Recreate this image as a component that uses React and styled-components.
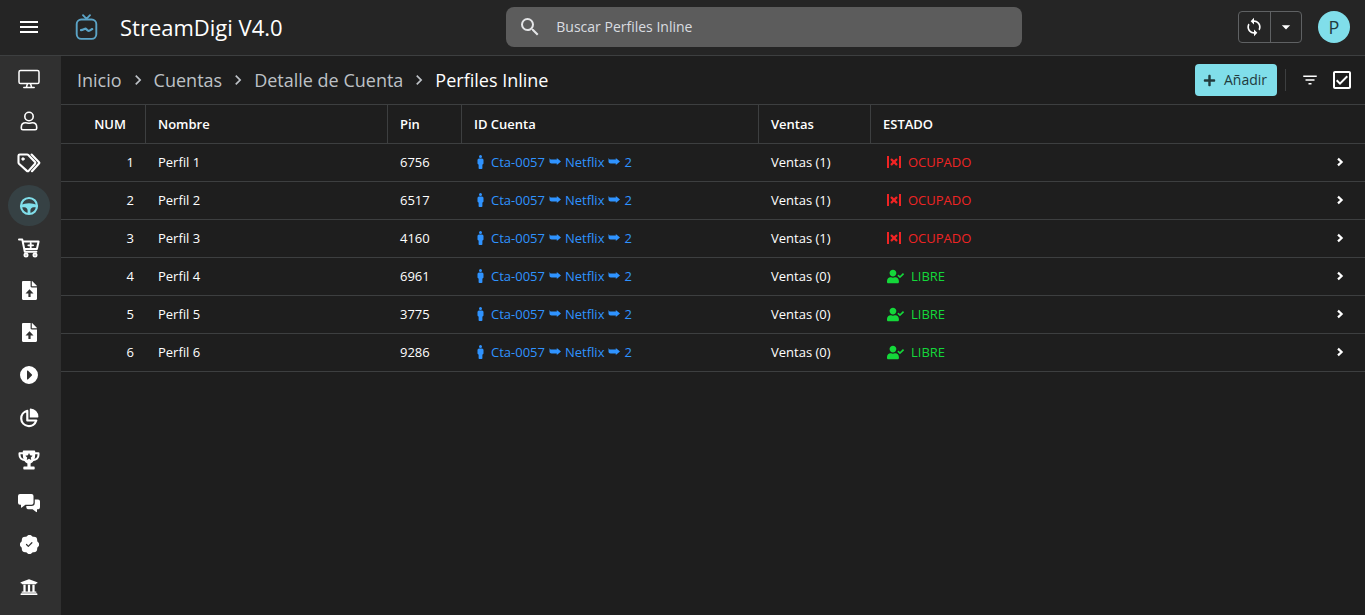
import React from "react";
import styled, { createGlobalStyle } from "styled-components";
import {
  MdMenu,
  MdSearch,
  MdSync,
  MdArrowDropDown,
  MdChevronRight,
  MdFilterList,
  MdOutlineCheckBox,
} from "react-icons/md";
import { FaPlus, FaUserCheck, FaUniversity } from "react-icons/fa";
import { BsPatchCheckFill } from "react-icons/bs";

const color = {
  page: "#1e1e1e",
  header: "#252525",
  rail: "#303030",
  line: "#3d3f40",
  text: "#ffffff",
  muted: "#bdc1c6",
  accent: "#80deea",
  accentInk: "#213a3d",
  link: "#2f93ff",
  busy: "#f02424",
  free: "#14d83a",
};

const GlobalStyle = createGlobalStyle`
  *, *::before, *::after { box-sizing: border-box; }
  body {
    margin: 0;
    background: ${color.page};
    color: ${color.text};
    font-family: "Open Sans", "Noto Sans", sans-serif;
    font-size: 13px;
    line-height: 18px;
  }
  button, input { font: inherit; color: inherit; }
  a { color: inherit; text-decoration: none; }
  svg { display: block; flex: none; }
`;

const Shell = styled.div`
  display: flex;
  flex-direction: column;
  min-height: 100vh;
`;

const Header = styled.header`
  display: flex;
  justify-content: space-between;
  align-items: center;
  height: 56px;
  padding: 0 15px 2px;
  background: ${color.header};
  border-bottom: 1px solid ${color.line};
`;

const Brand = styled.div`
  display: flex;
  align-items: center;
  padding-right: 8px;
`;

const IconButton = styled.button`
  display: flex;
  align-items: center;
  justify-content: center;
  width: ${(p) => p.$size || 28}px;
  height: ${(p) => p.$size || 28}px;
  padding: 0;
  border: 0;
  background: none;
  cursor: pointer;
`;

const BrandLink = styled.a`
  display: flex;
  align-items: center;
  gap: 20px;
  margin-left: 31px;
`;

const Title = styled.h1`
  margin: 0;
  font-size: 22px;
  line-height: 30px;
  font-weight: 400;
  white-space: nowrap;
`;

const SearchBox = styled.label`
  display: flex;
  flex: 0 1 516px;
  align-items: center;
  gap: 14px;
  height: 40px;
  padding: 0 12px;
  border-radius: 8px;
  background: #5c5c5c;
  color: #e4e5e7;
`;

const SearchInput = styled.input`
  flex: 1;
  min-width: 0;
  border: 0;
  outline: 0;
  padding: 0;
  background: none;
  font-size: 14px;
  line-height: 20px;
  &::placeholder { color: #dadce0; opacity: 1; }
`;

const HeaderActions = styled.div`
  display: flex;
  align-items: center;
  justify-content: flex-end;
  gap: 16px;
`;

const SplitButton = styled.div`
  display: flex;
  height: 32px;
  border: 1px solid #5f6163;
  border-radius: 4px;
`;

const SplitPart = styled.button`
  display: flex;
  align-items: center;
  justify-content: center;
  width: 31px;
  padding: 0;
  border: 0;
  background: none;
  cursor: pointer;
  & + & { border-left: 1px solid #5f6163; }
`;

const Avatar = styled.button`
  width: 32px;
  height: 32px;
  padding: 0;
  border: 0;
  border-radius: 50%;
  background: ${color.accent};
  color: ${color.accentInk};
  font-size: 18px;
  line-height: 32px;
  cursor: pointer;
`;

const Body = styled.div`
  display: flex;
  flex: 1;
`;

const Rail = styled.nav`
  display: flex;
  flex-direction: column;
  align-items: center;
  justify-content: space-between;
  flex: none;
  width: 61px;
  padding: 2px 3px 7px 0;
  background: ${color.rail};
`;

const RailLink = styled.a`
  display: flex;
  align-items: center;
  justify-content: center;
  width: 42px;
  height: 41px;
  border-radius: 50%;
  color: ${(p) => (p.$active ? color.accent : color.text)};
  background: ${(p) => (p.$active ? "#364144" : "none")};
`;

const Main = styled.main`
  flex: 1;
  min-width: 0;
`;

const Toolbar = styled.div`
  display: flex;
  align-items: center;
  justify-content: space-between;
  height: 49px;
  padding: 0 11px 0 16px;
  border-bottom: 1px solid ${color.line};
`;

const Crumbs = styled.nav`
  display: flex;
  align-items: center;
  gap: 6px;
  font-size: 18px;
  line-height: 26px;
  color: ${color.muted};
`;

const Current = styled.span`
  color: ${color.text};
`;

const Tools = styled.div`
  display: flex;
  align-items: center;
`;

const AddButton = styled.button`
  display: flex;
  align-items: center;
  gap: 8px;
  height: 32px;
  padding: 0 10px 0 8px;
  border: 0;
  border-radius: 4px;
  background: ${color.accent};
  color: ${color.accentInk};
  font-size: 14px;
  line-height: 20px;
  cursor: pointer;
`;

const Divider = styled.span`
  width: 1px;
  height: 22px;
  margin: 0 14px 0 8px;
  background: ${color.line};
`;

const TickBox = styled.span`
  margin-left: 10px;
`;

const Table = styled.table`
  width: 100%;
  table-layout: fixed;
  border-collapse: separate;
  border-spacing: 0;
`;

const Col = styled.col`
  width: ${(p) => (p.$width ? `${p.$width}px` : "auto")};
`;

const HeadCell = styled.th`
  height: 39px;
  padding: 0 ${(p) => (p.$num ? 19 : 12)}px 0 12px;
  border-bottom: 1px solid ${color.line};
  border-right: ${(p) => (p.$open ? "0" : `1px solid ${color.line}`)};
  font-weight: 600;
  text-align: ${(p) => (p.$num ? "right" : "left")};
`;

const Cell = styled.td`
  height: 38px;
  padding: 0 12px 1px;
  border-bottom: 1px solid ${color.line};
  text-align: ${(p) => (p.$num ? "right" : "left")};
  white-space: nowrap;
`;

const AccountLink = styled.a`
  display: flex;
  align-items: center;
  gap: 4px;
  padding-left: 3px;
  color: ${color.link};
  svg:first-child { margin-right: 3px; }
`;

const Status = styled.span`
  display: flex;
  align-items: center;
  gap: 7px;
  padding-left: 4px;
  color: ${(p) => (p.$busy ? color.busy : color.free)};
`;

const OpenLink = styled.a`
  display: flex;
  justify-content: flex-end;
  padding-right: 9px;
`;

const svg = (w, h, vb, children, extra = {}) => (
  <svg width={w} height={h} viewBox={vb} fill="currentColor" aria-hidden="true" {...extra}>
    {children}
  </svg>
);
const stroke = (width) => ({
  fill: "none",
  stroke: "currentColor",
  strokeWidth: width,
  strokeLinecap: "round",
  strokeLinejoin: "round",
});

const LogoIcon = () =>
  svg(26, 28, "0 0 26 28", (
    <>
      <rect x="2.700" y="6.500" width="19.600" height="19.400" rx="4.600" />
      <path d="M9 2.200 12.500 5.800 16 2.200" />
      <path d="M7 17.200c2.200-.2 3.200-1.300 4.800-1.500.9.500 1.500 2.200 3 2.100 1.300-.1 2-1 3.500-1.700" strokeWidth="2.200" />
    </>
  ), { ...stroke(1.9), stroke: "#5ba4c7" });

const DesktopIcon = () =>
  svg(22, 20, "0 0 22 20", (
    <>
      <rect x="1" y="1.500" width="20" height="13" rx="1.600" />
      <path d="M9.400 14.800 8.500 18m4.100-3.200.9 3.200M5.800 18.500h10.400" />
    </>
  ), stroke(1.5));

const UserIcon = () =>
  svg(18, 20, "0 0 18 20", (
    <>
      <circle cx="9" cy="5.500" r="4.200" />
      <path d="M5.600 11.700c1.300 0 1.900.6 3.400.6s2.100-.6 3.400-.6c2.600 0 4.300 1.900 4.300 4.500v1c0 .9-.6 1.500-1.500 1.500H2.800c-.9 0-1.500-.6-1.500-1.500v-1c0-2.600 1.700-4.500 4.300-4.500z" />
    </>
  ), stroke(1.6));

const TagsIcon = () =>
  svg(24, 20, "0 0 24 20", (
    <>
      <path d="M1.500 2.800c0-.8.5-1.300 1.300-1.300h7.300c.5 0 .9.200 1.200.5l6.700 7c.5.500.5 1.200 0 1.700l-6.400 7.200c-.5.500-1.200.5-1.700 0L2 10.700c-.3-.3-.5-.7-.5-1.200z" />
      <path d="m14.600 1.600 7.400 7.600c.4.400.4.900 0 1.300l-7 7.700" />
      <circle cx="6" cy="6" r="1.200" fill="currentColor" strokeWidth="1" />
    </>
  ), stroke(2.1));

const WheelIcon = () =>
  svg(20, 20, "0 0 20 20", (
    <>
      <circle cx="10" cy="10" r="8" fill="none" stroke="currentColor" strokeWidth="2.200" />
      <path d="M2 8.800c3-.6 4.600-1.600 8-1.600s5 1 8 1.600v2.400h-3.300c-1.900 0-3.300 1.500-3.300 3.300V18H8.600v-3.500c0-1.800-1.400-3.300-3.300-3.300H2z" />
    </>
  ));

const CartIcon = () =>
  svg(22, 20, "0 0 22 20", (
    <>
      <path d="M1 1.600h3.300l2.500 12.200h11.600M5 3.600h15.600l-1.700 7.300H6.400" />
      <path d="M12.700 4.900v4.800M10.300 7.300h4.800" strokeWidth="1.800" />
      <circle cx="8" cy="17" r="1.500" />
      <circle cx="17" cy="17" r="1.500" />
    </>
  ), stroke(2));

const FileUpIcon = () =>
  svg(15, 19, "0 0 15 19", (
    <>
      <path fillRule="evenodd" d="M1.200 0H8.600v5.200c0 .7.500 1.200 1.200 1.200H15v11.400c0 .7-.5 1.200-1.200 1.200H1.200C.5 19 0 18.500 0 17.800V1.200C0 .5.500 0 1.200 0zM7.500 8.300 3.500 12.400h2.900v3.500h2.200v-3.500h2.900z" />
      <path d="M9.800 0c.3 0 .5.100.8.400l4 4c.3.300.4.500.4.800H9.800z" />
    </>
  ));

const PlayIcon = () =>
  svg(18, 18, "0 0 18 18", (
    <path fillRule="evenodd" d="M9 0a9 9 0 1 1 0 18A9 9 0 0 1 9 0zM7 5v8c0 .5.500.700.900.400l4-3.900c.300-.300.300-.700 0-1l-4-3.900C7.500 4.300 7 4.500 7 5z" />
  ));

const PieIcon = () =>
  svg(20, 20, "0 0 20 20", (
    <>
      <path d="M8.300 2.800a7.700 7.700 0 1 0 9 9.700H8.300z" fill="none" stroke="currentColor" strokeWidth="2.200" strokeLinejoin="round" />
      <path d="M10.800 1c0-.4.300-.6.700-.6a8.200 8.200 0 0 1 7.900 8.300c0 .4-.2.700-.6.700h-8z" />
    </>
  ));

const TrophyIcon = () =>
  svg(22, 20, "0 0 22 20", (
    <>
      <path d="M5 3.300H1.500v1.500c0 3.200 2.500 5.200 6 5.400M17 3.300h3.500v1.500c0 3.200-2.500 5.200-6 5.400" {...stroke(2)} />
      <path d="M5.600.4h10.800c.5 0 .8.300.8.800v3.300c0 4.700-1.700 7.800-4.600 8.900v3.100h3c.7 0 1.100.4 1.100 1.100v1.200c0 .4-.3.700-.7.700H6c-.4 0-.7-.3-.7-.7v-1.200c0-.7.400-1.100 1.100-1.100h3v-3.100C6.500 12.300 4.800 9.200 4.800 4.500V1.200c0-.5.300-.8.800-.8z" />
      <path d="m11 3 1.100 2.300 2.500.4-1.800 1.700.4 2.500-2.200-1.200-2.200 1.200.4-2.500-1.800-1.700 2.500-.4z" fill={color.rail} />
    </>
  ));

const ChatIcon = () =>
  svg(22, 20, "0 0 22 20", (
    <>
      <path d="M2 1h11.500a2 2 0 0 1 2 2v6.800a2 2 0 0 1-2 2H7.400L3.800 14.600c-.4.300-.8.100-.8-.4v-2.400H2a2 2 0 0 1-2-2V3a2 2 0 0 1 2-2z" />
      <path d="M16.800 6.500H20a2 2 0 0 1 2 2v5.800a2 2 0 0 1-2 2h-1v2.300c0 .5-.4.700-.8.400l-3.600-2.700h-4.300a2 2 0 0 1-2-2v-1.200h5.200a3.300 3.300 0 0 0 3.300-3.300z" />
    </>
  ));

const PersonIcon = () =>
  svg(7, 14, "0 0 7 14", (
    <path d="M3.500 0a1.500 1.500 0 1 1 0 3 1.500 1.500 0 0 1 0-3zM2 3.500h3A1.500 1.500 0 0 1 6.500 5v3.600c0 .5-.4.800-.9.800H5.400v3.800c0 .5-.3.800-.8.800H2.400c-.5 0-.8-.3-.8-.8V9.400h-.2c-.5 0-.9-.3-.9-.8V5A1.500 1.500 0 0 1 2 3.500z" />
  ));

const HookArrow = () =>
  svg(12, 8, "0 0 12 8", (
    <path d="M.5 0 1.500 1.600H7.800V0L12 3.500 7.800 7V5.500H2.600C1.200 5.500.5 4.800.5 3.600z" />
  ));

const OpenIcon = () =>
  svg(8, 10, "0 0 8 10", <path d="m2 1.600 3.600 3.400L2 8.400" />, { ...stroke(2.2), strokeLinecap: "butt", strokeLinejoin: "miter" });

const BusyIcon = () =>
  svg(14, 12, "0 0 14 12", (
    <>
      <path d="M0 0h2v12H0zM12 0h2v12h-2z" />
      <path d="m4.600 3.600 4.800 4.800m0-4.800-4.800 4.800" stroke="currentColor" strokeWidth="2.200" strokeLinecap="round" />
    </>
  ));

const menu = [
  ["Panel", DesktopIcon],
  ["Clientes", UserIcon],
  ["Etiquetas", TagsIcon],
  ["Cuentas", WheelIcon],
  ["Ventas", CartIcon],
  ["Subir ventas", FileUpIcon],
  ["Subir cuentas", FileUpIcon],
  ["Reproducir", PlayIcon],
  ["Reportes", PieIcon],
  ["Logros", TrophyIcon],
  ["Mensajes", ChatIcon],
  ["Verificados", () => <BsPatchCheckFill size={19} />],
  ["Bancos", () => <FaUniversity size={18} />],
];

const columns = [
  ["NUM", 85],
  ["Nombre", 242],
  ["Pin", 74],
  ["ID Cuenta", 297],
  ["Ventas", 112],
  ["ESTADO", null],
];

const profiles = [
  ["6756", 1],
  ["6517", 1],
  ["4160", 1],
  ["6961", 0],
  ["3775", 0],
  ["9286", 0],
];

export default function App() {
  return (
    <Shell>
      <GlobalStyle />
      <Header>
        <Brand>
          <IconButton aria-label="Menú"><MdMenu size={24} /></IconButton>
          <BrandLink href="#inicio">
            <LogoIcon />
            <Title>StreamDigi V4.0</Title>
          </BrandLink>
        </Brand>
        <SearchBox>
          <MdSearch size={24} />
          <SearchInput type="search" aria-label="Buscar" placeholder="Buscar Perfiles Inline" />
        </SearchBox>
        <HeaderActions>
          <SplitButton>
            <SplitPart aria-label="Sincronizar"><MdSync size={20} /></SplitPart>
            <SplitPart aria-label="Más opciones"><MdArrowDropDown size={20} /></SplitPart>
          </SplitButton>
          <Avatar aria-label="Perfil de usuario">P</Avatar>
        </HeaderActions>
      </Header>
      <Body>
        <Rail aria-label="Secciones">
          {menu.map(([label, Icon]) => (
            <RailLink key={label} href="#seccion" aria-label={label} $active={label === "Cuentas"}>
              <Icon />
            </RailLink>
          ))}
        </Rail>
        <Main>
          <Toolbar>
            <Crumbs aria-label="Ruta">
              <a href="#inicio">Inicio</a>
              <MdChevronRight size={20} />
              <a href="#cuentas">Cuentas</a>
              <MdChevronRight size={20} />
              <a href="#detalle">Detalle de Cuenta</a>
              <MdChevronRight size={20} />
              <Current aria-current="page">Perfiles Inline</Current>
            </Crumbs>
            <Tools>
              <AddButton><FaPlus size={13} />Añadir</AddButton>
              <Divider />
              <IconButton $size={20} aria-label="Filtrar"><MdFilterList size={18} /></IconButton>
              <TickBox>
                <IconButton $size={24} aria-label="Seleccionar"><MdOutlineCheckBox size={24} /></IconButton>
              </TickBox>
            </Tools>
          </Toolbar>
          <Table>
            <colgroup>
              {columns.map(([name, width]) => <Col key={name} $width={width} />)}
              <Col $width={60} />
            </colgroup>
            <thead>
              <tr>
                {columns.map(([name, width]) => (
                  <HeadCell key={name} scope="col" $num={name === "NUM"} $open={!width}>{name}</HeadCell>
                ))}
                <HeadCell scope="col" $open aria-label="Abrir" />
              </tr>
            </thead>
            <tbody>
              {profiles.map(([pin, sales], i) => (
                <tr key={pin}>
                  <Cell $num>{i + 1}</Cell>
                  <Cell>Perfil {i + 1}</Cell>
                  <Cell>{pin}</Cell>
                  <Cell>
                    <AccountLink href="#cuenta">
                      <PersonIcon />
                      <span>Cta-0057</span>
                      <HookArrow />
                      <span>Netflix</span>
                      <HookArrow />
                      <span>2</span>
                    </AccountLink>
                  </Cell>
                  <Cell>Ventas ({sales})</Cell>
                  <Cell>
                    <Status $busy={sales > 0}>
                      {sales > 0 ? <BusyIcon /> : <FaUserCheck size={17} />}
                      {sales > 0 ? "OCUPADO" : "LIBRE"}
                    </Status>
                  </Cell>
                  <Cell>
                    <OpenLink href="#perfil" aria-label={`Abrir Perfil ${i + 1}`}>
                      <OpenIcon />
                    </OpenLink>
                  </Cell>
                </tr>
              ))}
            </tbody>
          </Table>
        </Main>
      </Body>
    </Shell>
  );
}
